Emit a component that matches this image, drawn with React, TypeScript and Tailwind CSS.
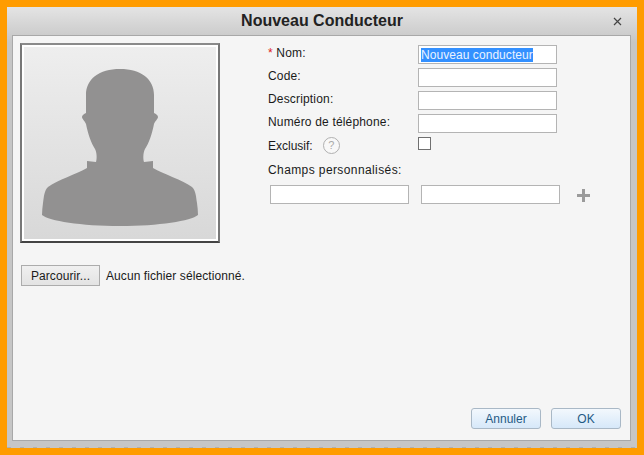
import React from "react";

const font = { fontFamily: '"Liberation Sans", Arial, sans-serif' };

function Field({ label, required, selected }: { label: string; required?: boolean; selected?: boolean }) {
  return (
    <div className="flex h-[23px] items-start">
      <div className="w-[150px] pt-[1px] text-[12px] leading-[14px] tracking-[0.17px] text-[#1a1a1a]">
        {required && <span className="text-[#d22]">* </span>}
        {label}
      </div>
      <div className="flex h-[19px] w-[139px] items-center border border-[#b4b4b4] bg-white px-[2px] text-[12px] leading-[14px] text-[#eaf3ff]">
        {selected && <span className="bg-[#3390ff] leading-[14px] tracking-[0.06px] whitespace-nowrap">Nouveau conducteur</span>}
      </div>
    </div>
  );
}

function Silhouette() {
  return (
    <svg width="158" height="158" viewBox="0 0 158 158" className="block">
      <path
        fill="#929191"
        d="M79 0C58 0 45 10 45 26V44C43 45 41 46 41 48C41 50 44 52 45 55C47 65 50 74 54 80C56 84 56 90 55 93L46 92L46 99C36 105 16 111 7 118C3 122 3 128 2 134C1.500 138 1 142 1 146C8 152 40 157 79 157C118 157 150 152 157 146C157 142 156.500 138 156 134C155 128 155 122 151 118C142 111 122 105 112 99L112 92L103 93C102 90 102 84 104 80C108 74 111 65 113 55C114 52 117 50 117 48C117 46 115 45 113 44V26C113 10 100 0 79 0Z"
      />
    </svg>
  );
}

export default function App() {
  return (
    <div className="h-[455px] w-[644px] overflow-hidden border-[7px] border-[#ff9c00] text-[#1a1a1a]" style={font}>
      <div className="flex h-[441px] w-[630px] flex-col bg-gradient-to-b from-[#e4e4e4] from-0% to-[#c6c6c6] to-[8%]">
        <div className="relative flex h-[28px] shrink-0 items-center justify-center text-[16px] font-bold text-[#222]">
          Nouveau Conducteur
          <svg width="9" height="9" viewBox="0 0 9 9" className="absolute top-[10px] right-[15px]">
            <path d="M1 1L8 8M8 1L1 8" stroke="#444" strokeWidth="1.200" />
          </svg>
        </div>
        <div className="ml-[5px] flex h-[406px] w-[619px] shrink-0 flex-col border border-[#a8a8a8] bg-[#f5f5f5] pt-[7px] pl-[7px] pr-[9px]">
          <div className="flex">
            <div className="w-[248px] shrink-0">
              <div className="h-[200px] w-[200px] border-2 border-t-[#8a8a8a] border-r-[#777] border-b-[#444] border-l-[#777] bg-white p-[2px]">
                <div className="flex h-full w-full justify-center overflow-hidden bg-gradient-to-b from-[#eeeeee] to-[#d8d8d8] pt-[22px]">
                  <Silhouette />
                </div>
              </div>
              <div className="mt-[22px] ml-[1px] flex items-center">
                <div className="flex h-[21px] w-[79px] items-center justify-center border border-[#acacac] bg-gradient-to-b from-[#f0f0f0] to-[#e3e3e3] text-[12px] tracking-[0.1px]">
                  Parcourir...
                </div>
                <span className="ml-[6px] text-[12px] tracking-[0.08px]">Aucun fichier sélectionné.</span>
              </div>
            </div>
            <div className="flex-1 pt-[2px]">
              <Field label="Nom:" required selected />
              <Field label="Code:" />
              <Field label="Description:" />
              <Field label="Numéro de téléphone:" />
              <div className="flex h-[23px] items-start">
                <div className="flex w-[150px] items-center pt-[1px] text-[12px] leading-[14px]">
                  Exclusif:
                  <span className="ml-[10px] -mt-[1px] flex h-[17px] w-[17px] items-center justify-center rounded-full border border-[#b0b0b0] bg-[#f8f8f8] text-[11px] leading-none text-[#aaa]">
                    ?
                  </span>
                </div>
                <div className="h-[13px] w-[13px] border border-[#707070] bg-white" />
              </div>
              <div className="mt-[3px] text-[12px] leading-[14px] tracking-[0.4px]">Champs personnalisés:</div>
              <div className="mt-[8px] ml-[2px] flex items-center">
                <div className="h-[19px] w-[139px] border border-[#b4b4b4] bg-white" />
                <div className="ml-[12px] h-[19px] w-[139px] border border-[#b4b4b4] bg-white" />
                <svg width="13" height="13" viewBox="0 0 13 13" className="ml-[17px] mt-[1px]">
                  <path d="M5 0H8V5H13V8H8V13H5V8H0V5H5Z" fill="#9b9b9b" />
                </svg>
              </div>
            </div>
          </div>
          <div className="mt-auto mb-[11px] flex justify-end gap-[10px]">
            <div className="flex h-[21px] w-[70px] items-center justify-center rounded-[3px] border border-[#a9b8c6] bg-gradient-to-b from-[#f3f8fd] to-[#d6e8f9] text-[12px] text-[#1f5a85]">
              Annuler
            </div>
            <div className="flex h-[21px] w-[70px] items-center justify-center rounded-[3px] border border-[#a9b8c6] bg-gradient-to-b from-[#f3f8fd] to-[#d6e8f9] text-[12px] text-[#1f5a85]">
              OK
            </div>
          </div>
        </div>
        <div className="mt-auto h-[1px] shrink-0 bg-[repeating-linear-gradient(90deg,#b0b0b0_0,#b0b0b0_4px,transparent_4px,transparent_13px)]" />
      </div>
    </div>
  );
}
